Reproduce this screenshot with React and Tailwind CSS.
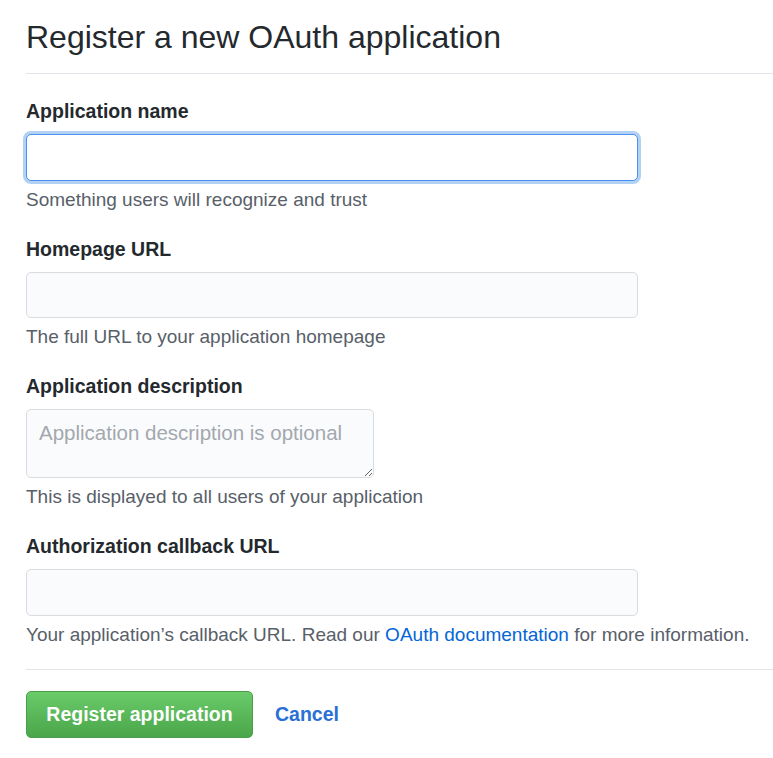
import React from "react";

const font = { fontFamily: '"Liberation Sans", Arial, sans-serif' };

function Label({ children }) {
  return (
    <div className="text-[19.5px] leading-[24px] font-bold text-[#24292e]">{children}</div>
  );
}

function Hint({ children }) {
  return (
    <div className="mt-[7px] text-[19px] leading-[24px] text-[#586069]">{children}</div>
  );
}

export default function App() {
  return (
    <div className="bg-white min-h-[758px] w-[773px] pl-[26px]" style={font}>
      <div className="pt-[17px] pb-[16px] border-b border-[#e1e4e8]">
        <h1 className="text-[32px] leading-[40px] font-normal text-[#24292e]">
          Register a new OAuth application
        </h1>
      </div>

      <div className="mt-[25px]">
        <Label>Application name</Label>
        <input
          type="text"
          className="mt-[11px] block w-[612px] h-[47px] rounded-[5px] border border-[#4a90ee] bg-white px-3 outline-none shadow-[0_0_0_3px_rgba(3,102,214,0.3)] text-[19px]"
        />
        <Hint>Something users will recognize and trust</Hint>
      </div>

      <div className="mt-[25px]">
        <Label>Homepage URL</Label>
        <input
          type="text"
          className="mt-[11px] block w-[612px] h-[46px] rounded-[5px] border border-[#d9dce0] bg-[#fafbfc] px-3 outline-none text-[19px]"
        />
        <Hint>The full URL to your application homepage</Hint>
      </div>

      <div className="mt-[25px]">
        <Label>Application description</Label>
        <textarea
          placeholder="Application description is optional"
          className="mt-[11px] block w-[348px] h-[69px] rounded-[5px] border border-[#d9dce0] bg-[#fafbfc] px-[12px] py-[11px] outline-none text-[20.5px] leading-[24px] text-[#24292e] placeholder:text-[#a3a8ae] resize"
          style={font}
        />
        <Hint>This is displayed to all users of your application</Hint>
      </div>

      <div className="mt-[25px]">
        <Label>Authorization callback URL</Label>
        <input
          type="text"
          className="mt-[11px] block w-[612px] h-[47px] rounded-[5px] border border-[#d9dce0] bg-[#fafbfc] px-3 outline-none text-[19px]"
        />
        <Hint>
          Your application’s callback URL. Read our{" "}
          <a href="#" className="text-[#0366d6]">OAuth documentation</a> for more information.
        </Hint>
      </div>

      <div className="mt-[22px] border-t border-[#e1e4e8]" />

      <div className="mt-[21px] flex items-center gap-[22px]">
        <button
          type="button"
          className="h-[47px] w-[227px] rounded-[5px] border border-[#4c9e4c] bg-gradient-to-b from-[#6acb69] to-[#4aa64a] text-white text-[19.5px] font-bold"
          style={font}
        >
          Register application
        </button>
        <a href="#" className="text-[19.5px] font-bold text-[#2a6fd6]">Cancel</a>
      </div>
    </div>
  );
}
